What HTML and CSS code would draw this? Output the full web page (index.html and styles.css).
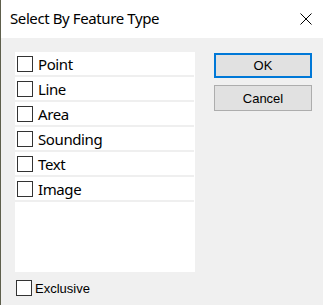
FILE: index.html
```html
<!DOCTYPE html>
<html lang="en">
<head>
  <title>Select By Feature Type</title>
  <meta charset="utf-8">
  <link rel="stylesheet" href="styles.css">
</head>
<body>
  <div class="dialog">
    <div class="titlebar">
      <span class="title">Select By Feature Type</span>
      <svg class="close" width="12" height="12" viewBox="0 0 12 12">
        <path d="M0.5 0.5 L11.5 11.5 M11.5 0.5 L0.5 11.5" stroke="#000" stroke-width="1" fill="none"/>
      </svg>
    </div>
    <div class="content">
      <div class="main">
        <ul class="list">
          <li class="list-item"><span class="box"></span>Point</li>
          <li class="list-item"><span class="box"></span>Line</li>
          <li class="list-item"><span class="box"></span>Area</li>
          <li class="list-item"><span class="box"></span>Sounding</li>
          <li class="list-item"><span class="box"></span>Text</li>
          <li class="list-item"><span class="box"></span>Image</li>
        </ul>
        <div class="buttons">
          <button class="button button-default" type="button">OK</button>
          <button class="button" type="button">Cancel</button>
        </div>
      </div>
      <label class="exclusive"><span class="box box-plain"></span>Exclusive</label>
    </div>
  </div>
</body>
</html>
```

FILE: styles.css
```css
*, *::before, *::after {
  margin: 0;
  padding: 0;
  box-sizing: border-box;
}

body {
  width: 323px;
  height: 305px;
  overflow: hidden;
  background-color: #F0F0F0;
  font-family: "Noto Sans", sans-serif;
  color: #000000;
}

.dialog {
  width: 323px;
  height: 305px;
  border-left: 1px solid #5E5F4C;
  background-color: #F0F0F0;
}

.titlebar {
  height: 38px;
  display: flex;
  align-items: center;
  justify-content: space-between;
  padding: 0 11px 0 9px;
  background-color: #FFFFFF;
}

.title {
  font-size: 15px;
  letter-spacing: -0.4px;
  line-height: 1;
  margin-top: -1px;
}

.close {
  display: block;
}

.content {
  padding: 14px 0 0 14px;
}

.main {
  display: flex;
  align-items: flex-start;
}

.list {
  list-style: none;
  width: 180px;
  height: 220px;
  background-color: #FFFFFF;
}

.list-item {
  height: 25px;
  display: flex;
  align-items: center;
  padding-left: 2px;
  border-bottom: 2px solid #EFEFEF;
  margin-right: 1px;
  font-size: 15px;
  letter-spacing: -0.4px;
}

.box {
  width: 16px;
  height: 16px;
  border: 1px solid #333333;
  background-color: #FFFFFF;
  margin-right: 5px;
  flex-shrink: 0;
}

.buttons {
  display: flex;
  flex-direction: column;
  gap: 7px;
  margin-left: 19px;
  margin-top: 1px;
}

.button {
  width: 98px;
  height: 26px;
  border: 1px solid #ADADAD;
  background-color: #E1E1E1;
  font-family: "Liberation Sans", sans-serif;
  font-size: 13px;
  color: #000000;
}

.button-default {
  border: 2px solid #0078D7;
  height: 25px;
}

.exclusive {
  display: flex;
  align-items: center;
  margin-top: 8px;
  margin-left: 1px;
  font-family: "Liberation Sans", sans-serif;
  font-size: 13px;
}

.box-plain {
  margin-right: 3px;
}
```
